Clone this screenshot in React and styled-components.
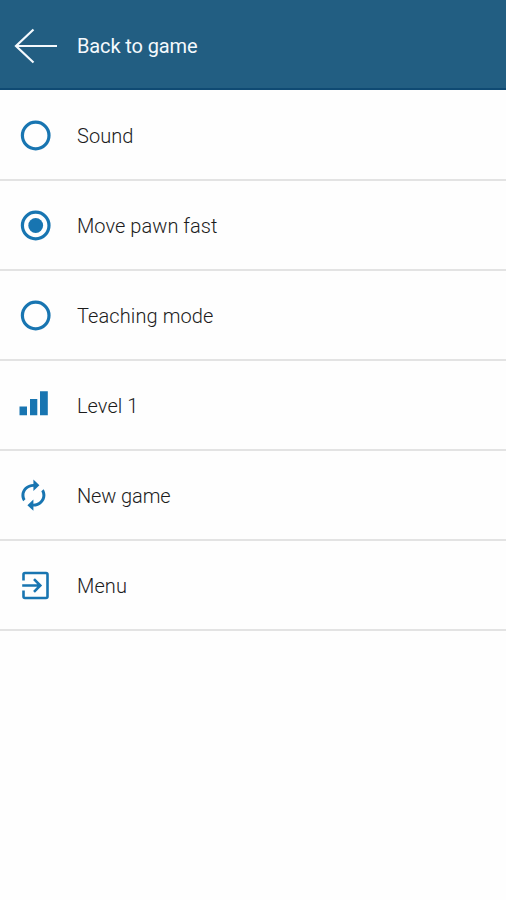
import styled, { createGlobalStyle } from "styled-components";

const GlobalStyle = createGlobalStyle`
  body {
    margin: 0;
    background: #fefefe;
    font-family: Roboto, "Liberation Sans", sans-serif;
  }
`;

const Screen = styled.main`
  width: 100%;
  min-height: 900px;
  background: #fefefe;
`;

const Header = styled.header`
  display: grid;
  grid-template-columns: 77px 1fr;
  align-items: center;
  box-sizing: border-box;
  height: 90px;
  padding-top: 4px;
  background: #225e82;
  border-bottom: 2px solid #0f4a73;
  color: #f4f9fd;
`;

const Title = styled.h1`
  margin: 0;
  font-size: 20px;
  font-weight: 400;
  line-height: 24px;
  letter-spacing: -0.12px;
`;

const List = styled.ul`
  list-style: none;
  margin: 0;
  padding: 0;
`;

const Item = styled.li`
  display: grid;
  grid-template-columns: 77px 1fr;
  align-items: center;
  box-sizing: border-box;
  height: 90px;
  padding-top: 2px;
  border-bottom: 2px solid #e3e3e3;
  color: #1875b1;
  &:first-child {
    height: 91px;
    padding-top: 3px;
  }
`;

const Label = styled.span`
  padding-bottom: 1px;
  color: #1c1c1c;
  font-size: 20px;
  font-weight: 300;
  line-height: 24px;
  letter-spacing: ${props => props.$spacing}px;
`;

const Icon = styled.svg`
  display: block;
  width: 77px;
  height: 60px;
`;

const BackIcon = () => (
  <Icon viewBox="0 0 77 60" fill="none" stroke="#f4f9fd" strokeWidth="2.2">
    <path d="M57 30H15.5M33.5 13.5L16 30L33.5 46.5" />
  </Icon>
);

const RadioIcon = ({ checked }) => (
  <Icon viewBox="0 0 77 60">
    <circle cx="35.7" cy="29.5" r="13.3" fill="none" stroke="currentColor" strokeWidth="3.2" />
    {checked && <circle cx="35.7" cy="29.5" r="7.4" fill="currentColor" />}
  </Icon>
);

const LevelIcon = () => (
  <Icon viewBox="0 0 77 60" fill="currentColor">
    <path d="M19.5 30.5h7.5v8.7h-7.5zM30 23h7.3v16.2H30zM40 15.3h7.8V39.2H40z" />
  </Icon>
);

const RenewIcon = () => (
  <Icon viewBox="0 0 77 60" fill="currentColor">
    <path transform="translate(15.4 12.2) scale(1.5 1.42)" d="M12 6v3l4-4-4-4v3c-4.42 0-8 3.58-8 8 0 1.57.46 3.03 1.24 4.26L6.7 14.8c-.45-.83-.7-1.79-.7-2.8 0-3.31 2.69-6 6-6zm6.76 1.74L17.3 9.2c.44.84.7 1.79.7 2.8 0 3.31-2.69 6-6 6v-3l-4 4 4 4v-3c4.42 0 8-3.58 8-8 0-1.57-.46-3.03-1.24-4.26z" />
  </Icon>
);

const MenuIcon = () => (
  <Icon viewBox="0 0 77 60" fill="none" stroke="currentColor" strokeWidth="2.6">
    <path d="M23.5 24.5V18.5a1.5 1.5 0 0 1 1.5-1.5H46a1.5 1.5 0 0 1 1.5 1.5V40.5a1.5 1.5 0 0 1-1.5 1.5H25a1.5 1.5 0 0 1-1.5-1.5V34.5" />
    <path d="M22.2 29.5H40M34 23.2L40.3 29.5L34 35.8" />
  </Icon>
);

const items = [
  { text: 'Sound', icon: <RadioIcon />, spacing: 0.05 },
  { text: 'Move pawn fast', icon: <RadioIcon checked />, spacing: 0.05 },
  { text: 'Teaching mode', icon: <RadioIcon />, spacing: 0.1 },
  { text: 'Level 1', icon: <LevelIcon />, spacing: 0.05 },
  { text: 'New game', icon: <RenewIcon />, spacing: -0.1 },
  { text: 'Menu', icon: <MenuIcon />, spacing: 0.1 },
];

function App() {
  return (<>
    <GlobalStyle />
    <Screen>
      <Header>
        <BackIcon />
        <Title>Back to game</Title>
      </Header>
      <List>
        {items.map(item => <Item key={item.text}>
          {item.icon}
          <Label $spacing={item.spacing}>{item.text}</Label>
        </Item>)}
      </List>
    </Screen>
  </>)
}

export default App;
